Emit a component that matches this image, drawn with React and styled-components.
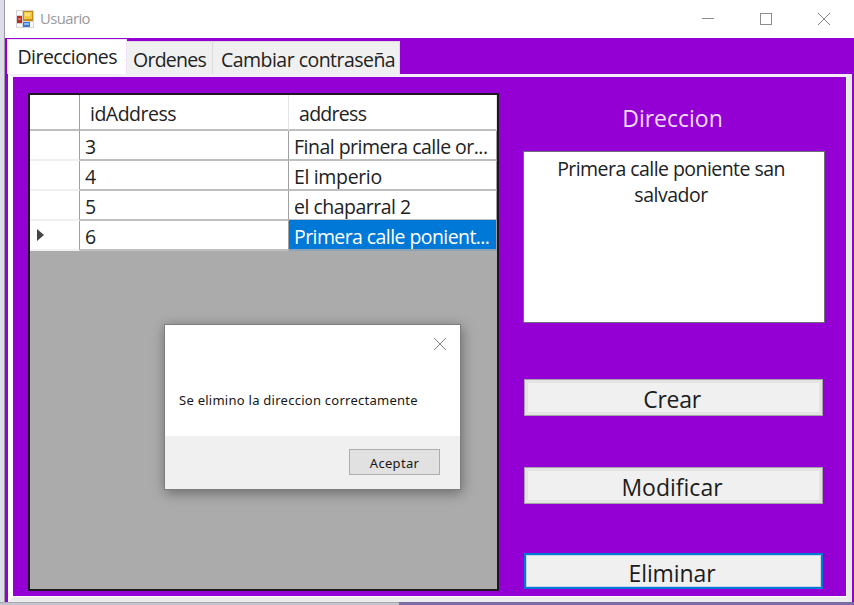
import React from 'react';
import styled, { createGlobalStyle } from 'styled-components';

const Global = createGlobalStyle`
  * { box-sizing: border-box; }
  body { margin: 0; overflow: hidden; font-family: "Open Sans", "Noto Sans", sans-serif; color: #222; }
  button { font-family: inherit; }
`;

const Desktop = styled.div`
  width: 854px; height: 605px; position: relative;
  display: flex; flex-direction: column; background: #dcdde8;
`;
const Window = styled.main`
  height: 602px; margin-left: 4px; border-left: 1px solid #9b98a6;
  display: flex; flex-direction: column; background: #9400d3;
`;
const DesktopEdge = styled.div`
  height: 3px; display: flex;
  background: linear-gradient(#a9a8b3 0 1px, #c3c4cd 1px);
  &::after { content: ""; margin-left: 399px; flex: 1; background: #7b6ca5; }
`;
const TitleBar = styled.header`
  height: 38px; flex: none; background: #fff; display: flex; align-items: center;
  padding-left: 11px;
`;
const Label = styled.span`
  white-space: nowrap;
  font-size: ${p => p.$size || 19.5}px;
  letter-spacing: ${p => p.$track || 0}px;
  line-height: 1;
`;
const Title = styled(Label)`color: #999; margin: -2px 0 0 6px; flex: 1;`;
const Controls = styled.div`display: flex; gap: 46px; padding-right: 24px; svg { display: block; }`;

const Tabs = styled.nav`height: 36px; flex: none; display: flex; align-items: flex-end; padding-left: 2px;`;
const Tab = styled.div`
  width: ${p => p.$w}px; height: ${p => (p.$active ? 35 : 33)}px;
  background: ${p => (p.$active ? '#fff' : '#f0f0f0')};
  border: 1px solid ${p => (p.$active ? '#f0e2f6' : '#dcdcdc')};
  border-left-width: ${p => (p.$first ? 1 : 0)}px; border-bottom: 0;
  padding: ${p => p.$pad};
`;
const Page = styled.section`
  height: 528px; width: 844px; margin-left: 3px; flex: none; display: flex;
  padding: 16px 0 0 15px; background: #9400d3;
  border-style: solid; border-width: 3px 5px 5px 5px;
  border-color: #f4eef7 #e9e9e9 #ececec #fff;
  box-shadow: inset 0 -1px #fff, inset -1px 0 #fff;
`;
const Grid = styled.div`
  width: 471px; height: 498px; border: 2px solid #1c1720; background: #ababab;
  display: flex; flex-direction: column; flex: none;
`;
const Row = styled.div`
  display: grid; grid-template-columns: 50px 209px 208px; height: ${p => p.$h || 30}px;
`;
const Cell = styled.div`
  border-right: 1px solid ${p => (p.$soft ? '#e4e4e4' : '#a0a0a0')};
  border-bottom: 2px solid ${p => (p.$gutter ? '#efefef' : '#bfbfbf')};
  background: ${p => (p.$selected ? '#0078d7' : '#fff')};
  color: ${p => (p.$selected ? '#fff' : '#222')};
  padding-left: ${p => p.$pad || 5}px; padding-top: ${p => (p.$gutter ? 0 : 4)}px;
  ${p => p.$selected && 'margin-top: -1px; padding-top: 5px; border-bottom-color: #8ba3b8;'}
  display: flex; align-items: center; overflow: hidden;
`;
const Side = styled.aside`width: 302px; margin-left: 24px; display: flex; flex-direction: column; align-items: center;`;
const Heading = styled(Label)`color: #f2dcfa; height: 22px; margin: 14px 0 22px -3px;`;
const TextBox = styled.div`
  width: 302px; height: 172px; background: #fff; border: 1px solid #6e6e78;
  padding-top: 7px; display: flex; flex-direction: column; align-items: center; gap: 6.5px;
  padding-right: 6px; flex: none;
`;
const Action = styled.button`
  width: 299px; height: ${p => (p.$focus ? 36 : 37)}px; flex: none; margin: ${p => p.$mt}px 1px 0 0;
  background: #f0f0f0; color: #1c1c1c; padding: ${p => (p.$focus ? 5 : 3)}px 3px 0 0;
  border: ${p => (p.$focus ? '2px solid #0078d7' : '1px solid #a6a2a8')};
  box-shadow: ${p => (p.$focus ? 'inset 0 0 0 1px #c5d6e4' : 'inset 0 0 0 3px #e3e3e3')};
  display: flex; justify-content: center; align-items: center;
`;
const Dialog = styled.div`
  position: absolute; left: 164px; top: 324px; width: 297px; height: 166px;
  background: #fff; border: 1px solid #7d7d7d; box-shadow: 1px 3px 12px rgba(0,0,0,.38);
  display: flex; flex-direction: column; font-family: "Noto Sans", sans-serif; color: #161616;
`;
const DialogTop = styled.div`height: 31px; display: flex; justify-content: flex-end; padding: 13px 14px 0 0;`;
const Message = styled.div`flex: 1; padding: 38px 0 0 14px; line-height: 1; display: flex;`;
const DialogFooter = styled.div`height: 53px; background: #f0f0f0; display: flex; justify-content: flex-end; padding: 13px 20px 0 0;`;
const Accept = styled.button`
  width: 91px; height: 26px; background: #e1e1e1; border: 1px solid #adadad; padding: 2px 0 0;
  color: #161616; display: flex; align-items: center; justify-content: center;
`;

const Close = () => (
  <svg width="12" height="12" viewBox="0 0 12 12" stroke="#858585" fill="none"><path d="M0 0l12 12M12 0l-12 12" /></svg>
);
const FormIcon = () => (
  <svg width="18" height="18" viewBox="0 0 18 18">
    <rect width="18" height="18" fill="#d5d5d7" />
    <path d="M1 1h5v4H1zM1 14h5v3H1zM14 12h3v5h-3z" fill="#fafafa" />
    <rect x="1" y="6" width="5" height="7" fill="#ba2f25" /><rect x="2.5" y="8" width="2" height="2" fill="#ee8c79" />
    <rect x="7" y="1" width="10" height="10" fill="#c38c16" /><rect x="8" y="2" width="8" height="7" fill="#f6c743" /><rect x="9" y="3" width="5" height="3" fill="#ffe07b" />
    <rect x="7" y="12" width="7" height="5" fill="#3c78d2" /><rect x="8" y="13" width="5" height="2" fill="#8bb9f4" />
  </svg>
);

const rows = [
  { id: '3', address: 'Final primera calle or...', track: -0.52 },
  { id: '4', address: 'El imperio', track: -0.35 },
  { id: '5', address: 'el chaparral 2', track: -0.5 },
  { id: '6', address: 'Primera calle ponient...', track: -0.58, selected: true },
];

export default function App() {
  return (
    <Desktop>
      <Global />
      <Window>
        <TitleBar>
          <FormIcon />
          <Title $size={14.8} $track={-0.55}>Usuario</Title>
          <Controls>
            <svg width="12" height="12"><path d="M0 5.5h12" stroke="#8c8c8c" /></svg>
            <svg width="12" height="12"><rect x=".5" y=".5" width="11" height="11" fill="none" stroke="#8c8c8c" /></svg>
            <Close />
          </Controls>
        </TitleBar>
        <Tabs>
          <Tab $active $first $w={120} $pad="7px 0 0 9.5px"><Label $track={-0.55}>Direcciones</Label></Tab>
          <Tab $w={86} $pad="8px 0 0 6px"><Label $track={-0.75}>Ordenes</Label></Tab>
          <Tab $w={187} $pad="8px 0 0 8px"><Label $track={-0.53}>Cambiar contraseña</Label></Tab>
        </Tabs>
        <Page>
          <Grid>
            <Row $h={36}>
              <Cell />
              <Cell $soft $pad={10}><Label $track={-0.5}>idAddress</Label></Cell>
              <Cell $soft $pad={10}><Label $track={-0.7}>address</Label></Cell>
            </Row>
            {rows.map(({ id, address, track, selected }) => (
              <Row key={id}>
                <Cell $gutter $pad={7}>
                  {selected && <svg width="8" height="12"><path d="M0 0L7 6L0 12Z" fill="#444" /></svg>}
                </Cell>
                <Cell><Label>{id}</Label></Cell>
                <Cell $selected={selected}><Label $track={track}>{address}</Label></Cell>
              </Row>
            ))}
          </Grid>
          <Side>
            <Heading $size={23}>Direccion</Heading>
            <TextBox>
              <Label $track={-0.55}>Primera calle poniente san</Label>
              <Label $track={-0.5}>salvador</Label>
            </TextBox>
            <Action $mt={56}><Label $size={23} $track={-0.3}>Crear</Label></Action>
            <Action $mt={51}><Label $size={23}>Modificar</Label></Action>
            <Action $mt={49} $focus><Label $size={23} $track={-0.1}>Eliminar</Label></Action>
          </Side>
        </Page>
      </Window>
      <DesktopEdge />
      <Dialog role="dialog">
        <DialogTop><Close /></DialogTop>
        <Message><Label $size={13} $track={0.26}>Se elimino la direccion correctamente</Label></Message>
        <DialogFooter><Accept><Label $size={13} $track={0.3}>Aceptar</Label></Accept></DialogFooter>
      </Dialog>
    </Desktop>
  );
}
